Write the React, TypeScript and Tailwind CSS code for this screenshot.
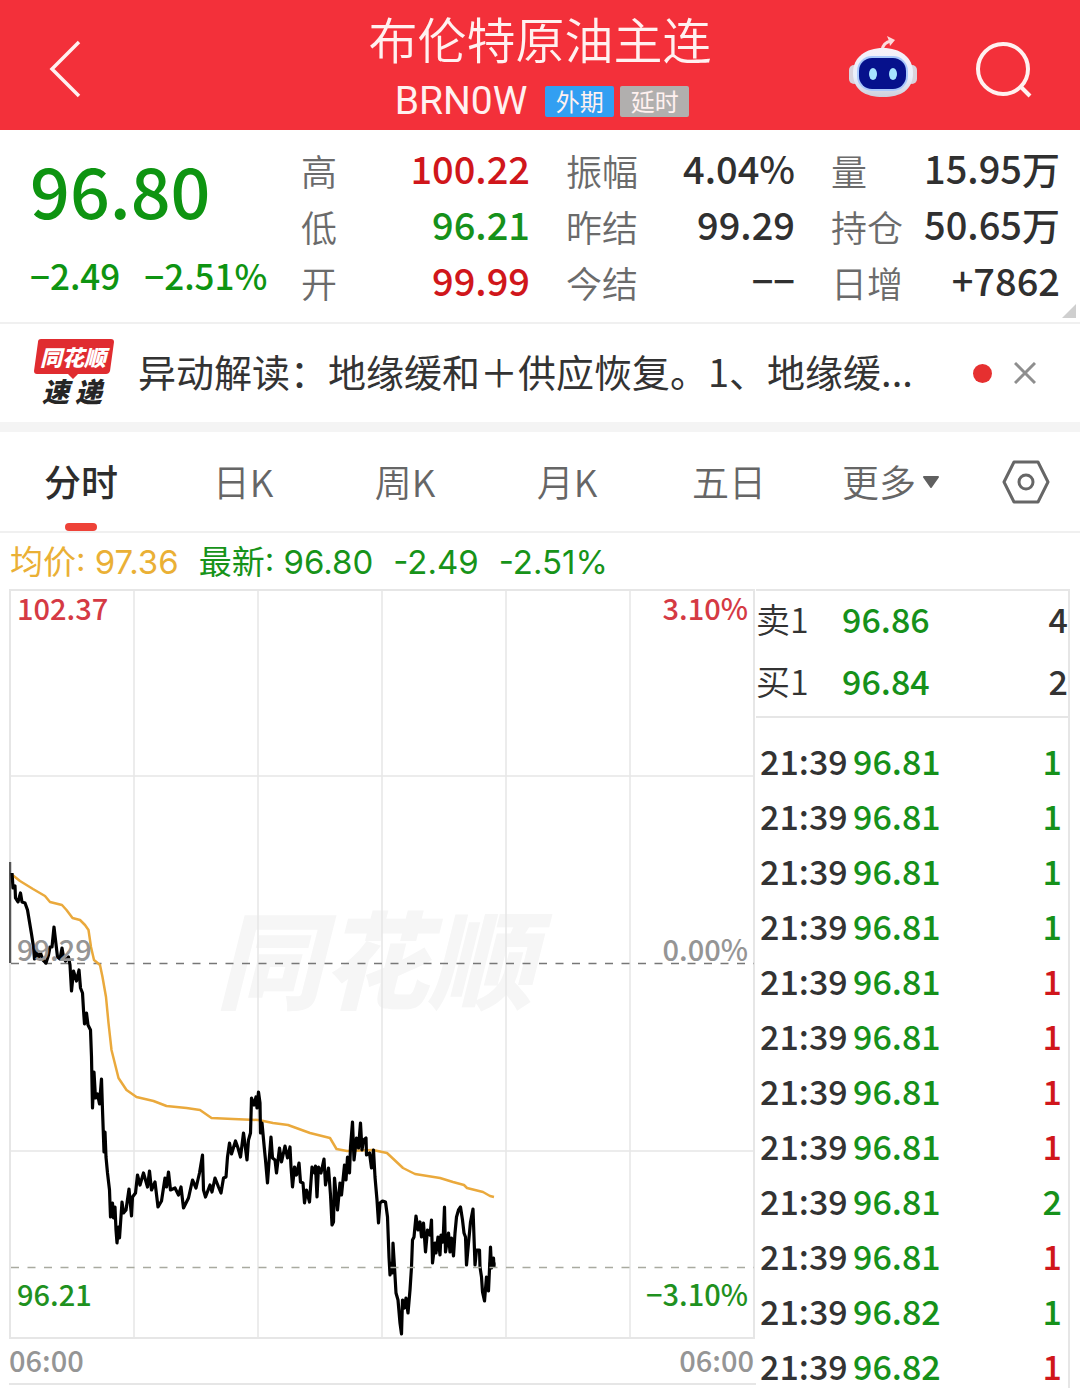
import { useState } from 'react'

const STATS = [
  [
    { label: '高', value: '100.22', color: 'text-[#d0161b]' },
    { label: '低', value: '96.21', color: 'text-[#16911a]' },
    { label: '开', value: '99.99', color: 'text-[#d0161b]' },
  ],
  [
    { label: '振幅', value: '4.04%', color: 'text-[#303030]' },
    { label: '昨结', value: '99.29', color: 'text-[#303030]' },
    { label: '今结', value: '−−', color: 'text-[#303030]' },
  ],
  [
    { label: '量', value: '15.95万', color: 'text-[#303030]' },
    { label: '持仓', value: '50.65万', color: 'text-[#303030]' },
    { label: '日增', value: '+7862', color: 'text-[#303030]' },
  ],
]

const TABS = ['分时', '日K', '周K', '月K', '五日', '更多']

const BOOK = [
  { side: '卖1', price: '96.86', volume: 4 },
  { side: '买1', price: '96.84', volume: 2 },
]

const TICKS = [
  { time: '21:39', price: '96.81', volume: 1, up: false },
  { time: '21:39', price: '96.81', volume: 1, up: false },
  { time: '21:39', price: '96.81', volume: 1, up: false },
  { time: '21:39', price: '96.81', volume: 1, up: false },
  { time: '21:39', price: '96.81', volume: 1, up: true },
  { time: '21:39', price: '96.81', volume: 1, up: true },
  { time: '21:39', price: '96.81', volume: 1, up: true },
  { time: '21:39', price: '96.81', volume: 1, up: true },
  { time: '21:39', price: '96.81', volume: 2, up: false },
  { time: '21:39', price: '96.81', volume: 1, up: true },
  { time: '21:39', price: '96.82', volume: 1, up: false },
  { time: '21:39', price: '96.82', volume: 1, up: true },
]

const PRICE_LINE =
  '12,873 12.5,880 13,888 15,886 15.5,898 18,902 20.5,893 22,902 25,903 27.5,910 30,925 31.5,934 33.5,947 34.5,959 36,950 38,958 40.5,953 43,960 46,963 48.5,955 50,947 52,947 54,927 55.5,940 57.5,957 60,959 62,948 63.5,957 65.5,961 68.5,957 70,965 71.5,991 73.5,971 76.5,981 79,970 80.5,988 82.5,993 83.5,1010 84.5,1024 86.5,1013 88,1025 90.5,1030 91.5,1057 92,1083 92.5,1108 94,1072 95.5,1098 97.5,1094 99.5,1104 101.5,1079 102.5,1110 104,1152 105,1132 106,1157 107.5,1173 109.5,1190 110.5,1217 112.5,1203 113.5,1218 115,1207 116,1230 117,1243 118.5,1227 119.5,1238 122,1202 123.5,1213 126,1210 129,1189 131.5,1216 132.5,1197 135.5,1193 137.5,1175 140,1185 143.5,1173 147.5,1187 149.5,1171 151.5,1190 155,1182 158,1207 161.5,1201 165,1178 166.5,1187 168.5,1172 170.5,1190 175,1188 178.5,1195 181,1187 183.5,1208 188.5,1198 192.5,1180 196,1188 199.5,1173 202.5,1155 203.5,1190 205.5,1197 210,1185 212,1192 215,1178 218.5,1187 221,1193 223.5,1178 226,1177 227.5,1157 229.5,1143 231.5,1154 235.5,1141 238,1148 240.5,1157 243.5,1133 247,1160 248.5,1140 250.5,1133 251.5,1098 254,1105 256,1097 257,1108 258.5,1092 260,1103 260.5,1133 262,1123 264.5,1150 265.5,1160 267.5,1183 269,1162 271,1137 272.5,1158 275,1160 276.5,1173 279.5,1148 281.5,1162 285,1146 287.5,1158 290,1147 291,1167 292.5,1187 294.5,1167 296.5,1175 299,1163 300.5,1182 303,1183 304.5,1203 306.5,1190 309.5,1202 312,1167 314.5,1173 315.5,1166 317,1197 318.5,1167 321,1173 324,1159 325.5,1185 328.5,1168 330.5,1195 332,1225 333.5,1222 334.5,1178 337.5,1210 340,1183 341.5,1195 344.5,1165 346,1180 347.5,1157 349.5,1173 350.5,1147 352.5,1122 354,1160 356.5,1138 358.5,1148 360.5,1123 362,1150 363.5,1140 366,1138 366.5,1155 369.5,1153 371.5,1168 373.5,1150 375,1177 377,1200 378.5,1223 380,1203 382.5,1201 385.5,1202 387.5,1217 389,1257 390,1275 391.5,1263 392.5,1273 393,1243 394.5,1267 396,1293 398,1300 400,1323 401.5,1334 402.5,1300 404.5,1308 406,1298 408,1313 410,1290 411.5,1267 412.5,1240 414,1237 416,1216 418,1230 420,1222 421.5,1237 423.5,1223 425.5,1252 427.5,1230 430,1235 431.5,1220 432.5,1263 435,1243 436,1253 438,1237 440,1255 441,1235 443,1242 444.5,1207 445.5,1252 448.5,1233 450,1252 451.5,1238 453.5,1256 455,1233 456.5,1217 458.5,1210 460.5,1207 462.5,1220 464,1233 465.5,1237 466.5,1265 468.5,1243 470.5,1222 473,1209 474,1237 475,1265 476.5,1250 479.5,1250 480,1267 481.5,1277 482.5,1292 484.5,1301 486.5,1277 488.5,1291 490.5,1247 491.5,1268 493.5,1258 494,1267'

const AVERAGE_LINE =
  '12.5,875 20,881 33,889 45,896 50,902 62,905 66.5,910 72.5,918 80,920 85,925 88.5,930 91,947 94,960 100,965 102.5,977 106,997 108.5,1023 111.5,1050 114.5,1062 118.5,1078 126.5,1090 136.5,1097 153.5,1101 166.5,1106 186.5,1108 200,1110 211.5,1118 233,1119 258.5,1120 273,1123 288,1125 310,1133 330,1138 336.5,1149 347,1151 373,1150 387,1153 403,1168 415,1174 440,1178 453,1182 464,1185 467,1188 483,1192 490,1196 494,1197'

function RobotIcon() {
  return (
    <svg viewBox="0 0 70 62" className="w-[70px] h-[62px]" aria-hidden="true">
      <defs>
        <linearGradient id="shell" x1="0" y1="0" x2="0" y2="1">
          <stop offset="0" stopColor="#f6f1f8" />
          <stop offset="0.6" stopColor="#e9effb" />
          <stop offset="1" stopColor="#cdd0dd" />
        </linearGradient>
      </defs>
      <path d="M34 14 C35 8 38 6 43 5" fill="none" stroke="#fbdcdc" strokeWidth="3" />
      <path d="M39 0 L47 4 L42 10 L41 5 Z" fill="#fbdcdc" />
      <rect x="1" y="29" width="10" height="19" rx="5" fill="#d9d3dd" />
      <rect x="59" y="29" width="10" height="19" rx="5" fill="#d9d3dd" />
      <path d="M35 12 C52 12 65 21 65 37 C65 54 53 61 35 61 C17 61 5 54 5 37 C5 21 18 12 35 12 Z" fill="url(#shell)" />
      <rect x="9" y="20" width="51" height="35" rx="15" fill="#a9c8fb" />
      <rect x="11" y="22" width="47" height="31" rx="13" fill="#06118c" />
      <ellipse cx="25" cy="38" rx="4" ry="6" fill="#a6e3ff" />
      <ellipse cx="45" cy="38" rx="4" ry="6" fill="#a6e3ff" />
    </svg>
  )
}

function Header() {
  return (
    <header className="grid grid-cols-[1fr_auto_1fr] items-center h-[130px] bg-[#f3303a] text-[#fff1f0]">
      <button aria-label="返回" className="justify-self-start ml-12 mt-2">
        <svg viewBox="0 0 34 60" className="w-[34px] h-[60px]" fill="none" stroke="currentColor" strokeWidth="3.5">
          <path d="M31 3 L4 30 L31 57" />
        </svg>
      </button>
      <div className="flex flex-col items-center gap-2 pt-1">
        <h1 className="text-[49px] leading-[60px] font-[350]">布伦特原油主连</h1>
        <div className="flex items-center gap-1.5 h-[50px] pl-1">
          <span className="text-[39px] leading-[50px] mr-3 font-[Roboto,sans-serif]">BRN0W</span>
          <span className="w-[69px] h-[31px] rounded-xs bg-[#329ff2] text-center text-2xl leading-[29px]">外期</span>
          <span className="w-[69px] h-[31px] rounded-xs bg-[#b1afae] text-center text-2xl leading-[29px]">延时</span>
        </div>
      </div>
      <div className="flex items-center justify-self-end gap-14 mr-12 mt-1">
        <button aria-label="智能助手">
          <RobotIcon />
        </button>
        <button aria-label="搜索" className="mt-1">
          <svg viewBox="0 0 58 58" className="w-[58px] h-[58px]" fill="none" stroke="currentColor" strokeWidth="4">
            <circle cx="29" cy="29" r="25" />
            <path d="M46 46 L56 56" />
          </svg>
        </button>
      </div>
    </header>
  )
}

function Quote() {
  return (
    <section className="relative flex h-[194px] pt-3 pr-5 pl-[30px] border-b-2 border-[#f0f0f0]">
      <div className="w-[271px] shrink-0 text-[#0e9411] font-medium">
        <p className="text-[70px] leading-[94px]">96.80</p>
        <p className="flex gap-6 text-[35px] leading-[78px]">
          <span>−2.49</span>
          <span>−2.51%</span>
        </p>
      </div>
      <div className="grid grid-cols-3 gap-x-9 flex-1">
        {STATS.map((column) => (
          <dl key={column[0].label}>
            {column.map((s) => (
              <div key={s.label} className="flex justify-between text-4xl leading-[56px] whitespace-nowrap">
                <dt className="text-[#6b6b6b] font-[350]">{s.label}</dt>
                <dd className={`text-[38px] leading-[51px] font-medium ${s.color}`}>{s.value}</dd>
              </div>
            ))}
          </dl>
        ))}
      </div>
      <svg viewBox="0 0 14 14" className="absolute right-1 bottom-1 w-3.5 h-3.5" aria-hidden="true">
        <path d="M14 0 V14 H0 Z" fill="#cfcfcf" />
      </svg>
    </section>
  )
}

function NewsBar() {
  return (
    <section className="flex items-center h-[108px] pl-[34px] pr-11 border-b-10 border-[#f4f4f4]">
      <div className="relative w-20 h-[70px] shrink-0 italic font-black whitespace-nowrap">
        <svg viewBox="0 0 80 70" className="absolute inset-0 w-20 h-[70px]" aria-hidden="true">
          <path d="M7 1 H77 Q80 1 80 4 L76 33 Q75 36 72 36 H44 L39 41 L34 36 H3 Q0 36 0 33 L4 4 Q4 1 7 1 Z" fill="#e02c30" />
        </svg>
        <p className="relative pl-1.5 text-[22px] leading-[36px] text-white">同花顺</p>
        <p className="relative flex gap-1.5 pl-2 text-[27px] leading-[34px] text-[#262626]">
          <span>速</span>
          <span>递</span>
        </p>
      </div>
      <a href="#news" className="flex-1 min-w-0 ml-6 pb-1 text-[38px] leading-[56px] text-[#333333] whitespace-nowrap overflow-hidden">
        异动解读：地缘缓和＋供应恢复。1、地缘缓...
      </a>
      <span className="w-[19px] h-[19px] rounded-full bg-[#e63030] mr-[22px]" />
      <button aria-label="关闭">
        <svg viewBox="0 0 22 22" className="w-[22px] h-[22px]" stroke="#8e8e8e" strokeWidth="3">
          <path d="M1 1 L21 21 M21 1 L1 21" />
        </svg>
      </button>
    </section>
  )
}

function Tabs() {
  const [active, setActive] = useState('分时')
  return (
    <nav className="flex h-[101px] border-b-2 border-[#f0f0f0]">
      {TABS.map((tab) => (
        <button
          key={tab}
          onClick={() => setActive(tab)}
          className={`relative flex flex-1 items-center justify-center gap-1.5 text-[37px] ${
            tab === active ? 'font-medium text-[#2d2d2d]' : 'font-[350] text-[#666666]'
          }`}
        >
          {tab}
          {tab === '更多' && (
            <svg viewBox="0 0 18 12" className="w-[18px] h-3" aria-hidden="true">
              <path d="M2 1 H16 L9 11 Z" fill="#606060" stroke="#606060" strokeWidth="2" strokeLinejoin="round" />
            </svg>
          )}
          {tab === active && <span className="absolute bottom-0 w-8 h-2 rounded-full bg-[#ee4238]" />}
        </button>
      ))}
      <button aria-label="设置" className="flex items-center justify-center w-[108px]">
        <svg viewBox="0 0 48 44" className="w-12 h-11" fill="none" stroke="#666666" strokeWidth="3">
          <path d="M12 2 H36 L46 22 L36 42 H12 L2 22 Z" strokeLinejoin="round" />
          <circle cx="24" cy="22" r="7" />
        </svg>
      </button>
    </nav>
  )
}

function Chart() {
  return (
    <div className="flex-1 min-w-0">
      <div className="relative">
        <svg viewBox="9 589 747 750" className="block w-full" fill="none">
          <text x="216" y="1001" fontSize="106" fill="#f6f6f6" className="italic font-black">同花顺</text>
          <g stroke="#e6e6e6" strokeWidth="2">
            <path d="M134 590 V1338 M258 590 V1338 M382 590 V1338 M506 590 V1338 M630 590 V1338" strokeWidth="1.5" />
            <path d="M10 776 H754 M10 1151 H754" strokeWidth="1.5" />
            <path d="M10 590 H754 V1338 H10 Z" />
          </g>
          <path d="M10 862 V963" stroke="#555555" strokeWidth="2.5" />
          <path d="M11 963.5 H754" stroke="#777777" strokeWidth="1.5" strokeDasharray="8 8.5" />
          <polyline points={AVERAGE_LINE} stroke="#eaa93c" strokeWidth="2.5" strokeLinejoin="round" />
          <polyline points={PRICE_LINE} stroke="#000000" strokeWidth="3.2" strokeLinejoin="round" />
          <circle cx="492" cy="1264" r="3.5" fill="#000000" />
          <path d="M11 1267.5 H754" stroke="#a9aaa0" strokeWidth="1.5" strokeDasharray="8 8.5" />
        </svg>
        <div className="absolute inset-0 flex flex-col justify-between px-2 text-[29px] leading-[36px] font-medium">
          <p className="flex justify-between text-[#d53a44]">
            <span>102.37</span>
            <span>3.10%</span>
          </p>
          <p className="flex justify-between mb-1 text-[#959595]">
            <span>99.29</span>
            <span>0.00%</span>
          </p>
          <p className="flex justify-between mb-7 text-[#1f911f]">
            <span>96.21</span>
            <span>−3.10%</span>
          </p>
        </div>
      </div>
      <p className="flex justify-between h-[46px] pr-0.5 text-[29px] leading-[40px] font-medium text-[#959595] border-b-2 border-[#e6e6e6]">
        <span>06:00</span>
        <span>06:00</span>
      </p>
    </div>
  )
}

function Trades() {
  return (
    <aside className="w-[314px] mr-2.5 border-t-2 border-r-2 border-[#e6e6e6]">
      <table className="w-full text-[34px] leading-[36px] text-[#333333] border-b-2 border-[#e6e6e6]">
        <tbody>
          {BOOK.map((row) => (
            <tr key={row.side} className="h-[63px]">
              <th scope="row" className="w-[86px] p-0 pb-2 text-left font-[350]">{row.side}</th>
              <td className="p-0 pb-2 font-medium text-[#16911a]">{row.price}</td>
              <td className="p-0 pb-2 text-right font-medium">{row.volume}</td>
            </tr>
          ))}
        </tbody>
      </table>
      <table className="w-full mt-[18px] text-[34px] leading-[36px] font-medium">
        <tbody>
          {TICKS.map((row, i) => (
            <tr key={i} className="h-[55px]">
              <td className="w-[97px] p-0 pb-1.5 pl-1 text-[#333333]">{row.time}</td>
              <td className="p-0 pb-1.5 text-[#16911a]">{row.price}</td>
              <td className={`p-0 pb-1.5 pr-1.5 text-right ${row.up ? 'text-[#d0161b]' : 'text-[#16911a]'}`}>{row.volume}</td>
            </tr>
          ))}
        </tbody>
      </table>
    </aside>
  )
}

export default function App() {
  return (
    <main className="h-screen overflow-hidden bg-white font-['Noto_Sans_CJK_SC',sans-serif]">
      <Header />
      <Quote />
      <NewsBar />
      <Tabs />
      <p className="flex gap-5 h-14 pl-2.5 text-[33px] leading-[58px] text-[#179319] whitespace-nowrap font-[Inter,'Noto_Sans_CJK_SC',sans-serif]">
        <span className="text-[#eab035]">均价: 97.36</span>
        <span>最新: 96.80</span>
        <span>-2.49</span>
        <span>-2.51%</span>
      </p>
      <div className="flex pl-[9px]">
        <Chart />
        <Trades />
      </div>
    </main>
  )
}
